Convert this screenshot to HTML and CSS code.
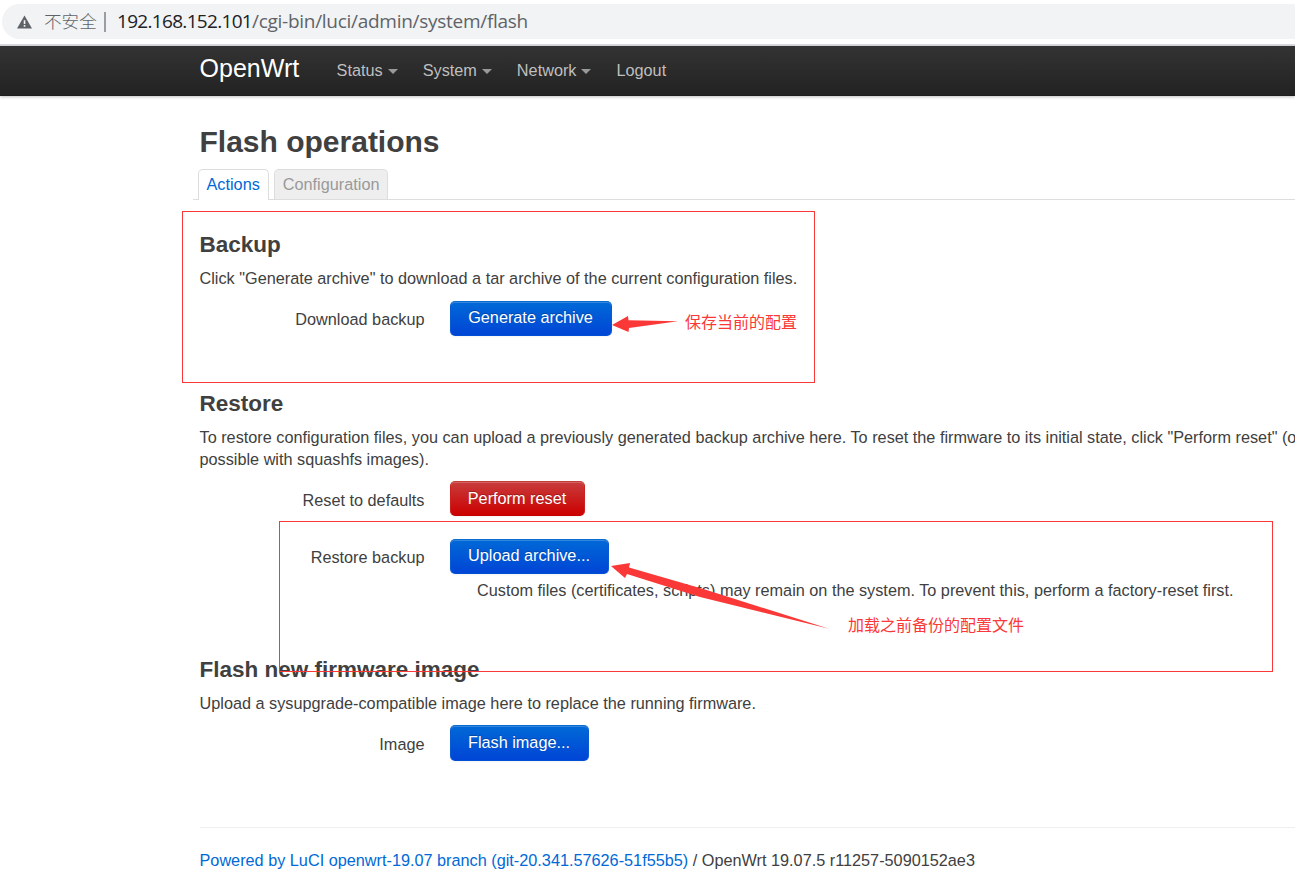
FILE: index.html
```
<!DOCTYPE html>
<html lang="en">
<head>
<meta charset="utf-8">
<title>OpenWrt - Flash operations</title>
<link rel="stylesheet" href="styles.css">
</head>
<body>
<div class="browser-bar">
  <div class="omnibox">
    <svg class="warn" width="16" height="14" viewBox="0 0 16 14"><path d="M8 0 16 14H0Z" fill="#5f6368"/><path d="M7.2 5h1.7v4H7.2zM7.2 10.3h1.7v1.7H7.2z" fill="#f1f3f4"/></svg>
    <span class="insecure">不安全</span>
    <span class="divider"></span>
    <span class="url"><span class="host">192.168.152.101</span><span class="path">/cgi-bin/luci/admin/system/flash</span></span>
  </div>
</div>
<header class="topbar">
  <a class="brand">OpenWrt</a>
  <nav class="menu">
    <a class="item">Status<i class="caret"></i></a>
    <a class="item">System<i class="caret"></i></a>
    <a class="item">Network<i class="caret"></i></a>
    <a class="item">Logout</a>
  </nav>
</header>
<main class="container">
  <h2 class="title">Flash operations</h2>
  <div class="tabs"><a class="tab active">Actions</a><a class="tab config">Configuration</a></div>
  <section class="section backup">
    <h3>Backup</h3>
    <p>Click "Generate archive" to download a tar archive of the current configuration files.</p>
    <div class="row"><label>Download backup</label><button class="btn w-generate">Generate archive</button></div>
  </section>
  <section class="section restore">
    <h3>Restore</h3>
    <p>To restore configuration files, you can upload a previously generated backup archive here. To reset the firmware to its initial state, click "Perform reset" (only possible with squashfs images).</p>
    <div class="row low"><label>Reset to defaults</label><button class="btn danger w-reset">Perform reset</button></div>
    <div class="row"><label>Restore backup</label><button class="btn w-upload">Upload archive...</button></div>
    <div class="hint">Custom files (certificates, scripts) may remain on the system. To prevent this, perform a factory-reset first.</div>
  </section>
  <section class="section flash">
    <h3>Flash new firmware image</h3>
    <p>Upload a sysupgrade-compatible image here to replace the running firmware.</p>
    <div class="row low"><label>Image</label><button class="btn w-flash">Flash image...</button></div>
  </section>
  <footer><a>Powered by LuCI openwrt-19.07 branch (git-20.341.57626-51f55b5)</a> / OpenWrt 19.07.5 r11257-5090152ae3</footer>
</main>
<div class="frame frame-backup"></div>
<div class="frame frame-restore"></div>
<svg class="arrows" width="1295" height="891" viewBox="0 0 1295 891" fill="#fb3838">
  <path d="M612 325 628 316 628.500 320.300 678 321.300 629 328 628.500 332Z"/>
  <path d="M611 566 630 563 629 567.500 705 589.500 829 628.700 700 597 627 574 625 578Z"/>
</svg>
<div class="note note-backup">保存当前的配置</div>
<div class="note note-restore">加载之前备份的配置文件</div>
</body>
</html>
```
FILE: styles.css
```
* { box-sizing: border-box; }
html, body { height: 891px; overflow: hidden; }
body {
  position: relative;
  margin: 0;
  background: #fff;
  color: #404040;
  font: 16.25px/22px "Liberation Sans", Arial, sans-serif;
}
.browser-bar { height: 46px; padding: 4px 0 0 2px; border-bottom: 2px solid #dadce0; }
.omnibox {
  display: flex;
  align-items: center;
  height: 35px;
  padding-left: 15px;
  border-radius: 18px 0 0 18px;
  background: #f1f3f4;
  color: #5f6368;
}
.warn { width: 15px; }
.insecure { margin-left: 12px; width: 53px; padding-bottom: 2px; font: 300 17.6px/32px "Noto Sans CJK SC", sans-serif; white-space: nowrap; }
.divider { width: 2px; height: 20px; margin: 0 12px 0 7px; background: #9a9da1; }
.url { display: flex; margin-left: -1px; padding-bottom: 2px; font: 19px/32px "Open Sans", "Noto Sans", sans-serif; white-space: nowrap; }
.host { width: 135px; color: #202124; letter-spacing: -0.69px; }
.path { letter-spacing: -0.28px; }
.topbar {
  display: flex;
  height: 50px;
  padding-left: 199.6px;
  background: linear-gradient(#333, #222);
  box-shadow: 0 1px 3px rgba(0,0,0,.25), inset 0 -1px 0 rgba(0,0,0,.1);
}
.brand { width: 137px; color: #fff; font-size: 25px; line-height: 44px; }
.menu { display: flex; gap: 25px; color: #bfbfbf; line-height: 49px; }
.item { display: flex; align-items: center; height: 49px; }
.caret { margin: 2px 0 0 5px; border: 5px solid transparent; border-top-color: #999; border-bottom: 0; }
.container { width: 1175px; margin-left: 199.5px; padding-top: 23px; }
h2, h3, p { margin: 0; }
.title { height: 50px; font-size: 30px; line-height: 45px; }
.tabs { display: flex; gap: 5px; height: 31px; margin-left: -7px; padding-left: 5px; border-bottom: 1px solid #ddd; }
.tab {
  height: 30px;
  padding: 0 8px;
  border: 1px solid #ddd;
  border-bottom: 0;
  border-radius: 5px 5px 0 0;
  background: #eee;
  color: #999;
  line-height: 29px;
}
.tab.active { height: 31px; background: #fff; color: #0069d6; }
.tab.config { width: 114px; }
.backup { height: 159px; margin-top: 21px; }
.restore { height: 266px; }
.flash { height: 181px; }
h3 { height: 46px; font-size: 22.5px; line-height: 48px; }
.section p { line-height: 22px; }
.row { display: flex; height: 35px; margin-top: 12px; }
.restore .row { margin-top: 11px; }
.restore .row + .row { margin-top: 23px; }
.flash .row { height: 36px; margin-top: 11px; }
.row label { width: 225px; margin-right: 25px; line-height: 37px; text-align: right; }
.row.low label { line-height: 39px; }
.row.low .btn { line-height: 33px; }
.btn {
  padding: 0;
  border: 1px solid #0064cd;
  border-color: #0a6bd2 #0a5bd3 #0050d5;
  border-radius: 5px;
  background: linear-gradient(#0069d6, #0045d6);
  box-shadow: inset 0 1px 0 rgba(255,255,255,.2), 0 1px 2px rgba(0,0,0,.05);
  color: #fff;
  font: 16.25px/31px "Liberation Sans", Arial, sans-serif;
  text-shadow: 0 -1px 0 rgba(0,0,0,.25);
  display: flex;
  justify-content: center;
  align-items: flex-start;
}
.btn.danger { border-color: #c43c35 #c92020 #c40000; background: linear-gradient(#c83c3c, #cc0000); }
.w-generate { width: 162px; }
.w-reset { width: 135px; }
.w-upload { width: 159px; }
.w-flash { width: 139px; }
.hint { margin: 5px 0 0 277.500px; }
footer { border-top: 1px solid #eee; padding-top: 21px; }
footer a { color: #0069d6; }
.frame { position: absolute; border: 1px solid #fb3838; }
.frame-backup { left: 182px; top: 211px; width: 633px; height: 172px; }
.frame-restore { left: 279px; top: 521px; width: 994px; height: 151px; }
.arrows { position: absolute; left: 0; top: 0; }
.note { position: absolute; color: #fb3838; font: 16px/22px "Noto Sans CJK SC", sans-serif; white-space: nowrap; }
.note-backup { left: 685px; top: 310px; }
.note-restore { left: 848px; top: 613px; }
```
